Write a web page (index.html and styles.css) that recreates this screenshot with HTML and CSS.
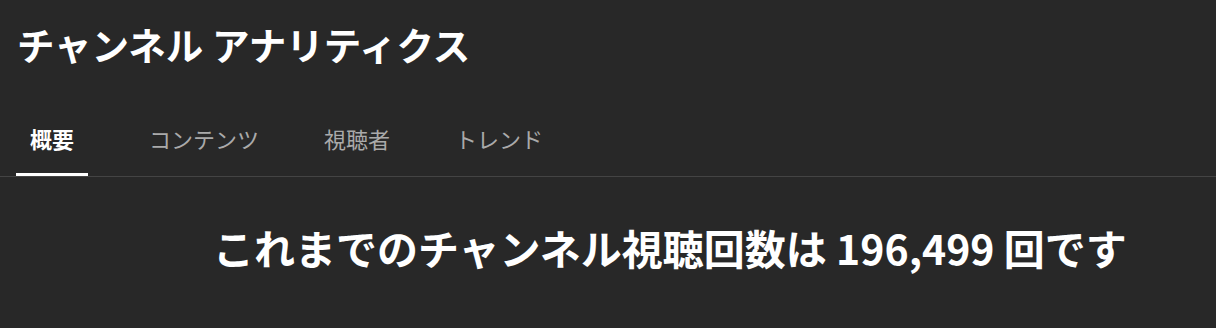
FILE: index.html
```html
<!DOCTYPE html>
<html lang="ja">
<head>
  <meta charset="UTF-8">
  <link rel="stylesheet" href="styles.css">
</head>
<body>
  <div class="page-header">
    <h1 class="page-title">チャンネル アナリティクス</h1>
  </div>
  <div class="tab-bar">
    <div class="tab active">概要</div>
    <div class="tab">コンテンツ</div>
    <div class="tab">視聴者</div>
    <div class="tab">トレンド</div>
  </div>
  <div class="summary">
    <h2 class="summary-text">これまでのチャンネル視聴回数は 196,499 回です</h2>
  </div>
</body>
</html>
```

FILE: styles.css
```css
body {
  margin: 0;
  background: #282828;
  color: #fff;
  font-family: "Noto Sans CJK JP", "Noto Sans", sans-serif;
  width: 1216px;
  height: 328px;
  overflow: hidden;
}
.page-header {
  padding: 20px 0 0 17px;
  height: 68px;
  box-sizing: border-box;
}
.page-title {
  margin: 0;
  font-size: 37.5px;
  font-weight: 700;
  line-height: 48px;
}
.tab-bar {
  display: flex;
  margin-top: 44px;
  padding-left: 16px;
  border-bottom: 1px solid #444;
  gap: 37px;
}
.tab {
  padding: 0 14px;
  height: 64px;
  line-height: 52px;
  font-size: 22px;
  color: #aaa;
  box-sizing: border-box;
}
.tab.active {
  color: #fff;
  font-weight: 700;
  border-bottom: 3px solid #fff;
  margin-right: 10px;
}
.summary {
  padding: 42px 0 0 213px;
}
.summary-text {
  margin: 0;
  font-size: 41px;
  font-weight: 700;
  line-height: 56px;
}
```
